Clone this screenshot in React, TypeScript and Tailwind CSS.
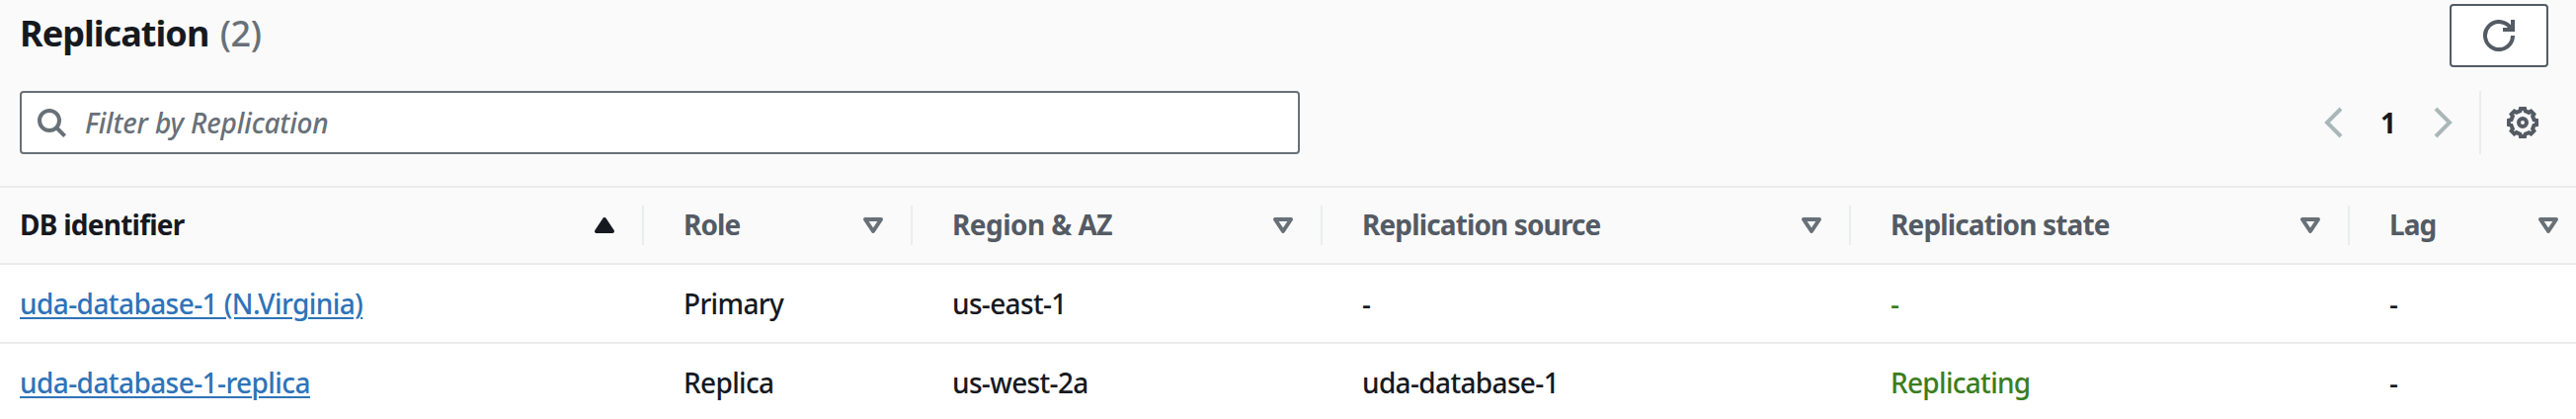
import type { ReactNode } from "react";

type Sort = "asc" | "none";

const columns: { label: string; width: string; tracking: string; sort: Sort }[] = [
  { label: "DB identifier", width: "w-[652px] pl-5", tracking: "tracking-[-0.75px]", sort: "asc" },
  { label: "Role", width: "w-[272px] pl-10", tracking: "tracking-[-0.9px]", sort: "none" },
  { label: "Region & AZ", width: "w-[415px] pl-10", tracking: "tracking-[-0.55px]", sort: "none" },
  { label: "Replication source", width: "w-[535px] pl-10", tracking: "tracking-[-0.87px]", sort: "none" },
  { label: "Replication state", width: "w-[505px] pl-10", tracking: "tracking-[-0.85px]", sort: "none" },
  { label: "Lag", width: "w-[229px] pl-10", tracking: "tracking-[-0.9px]", sort: "none" },
];

const rows = [
  ["uda-database-1 (N.Virginia)", "Primary", "us-east-1", "-", "-", "-"],
  ["uda-database-1-replica", "Replica", "us-west-2a", "uda-database-1", "Replicating", "-"],
];

// Outline of an eight-toothed cog centred on (8, 8).
const cogPoints = Array.from({ length: 8 }, (_, i) => {
  const a = (i * Math.PI) / 4;
  return [
    [-1.05, -7],
    [1.05, -7],
    [1.35, -5.8],
    [3.15, -5.05],
  ]
    .map(([x, y]) => `${(8 + x * Math.cos(a) - y * Math.sin(a)).toFixed(2)},${(8 + x * Math.sin(a) + y * Math.cos(a)).toFixed(2)}`)
    .join(" ");
}).join(" ");

function Icon({ className, children }: { className: string; children: ReactNode }) {
  return (
    <svg viewBox="0 0 16 16" className={`size-8 shrink-0 ${className}`} fill="none" stroke="currentColor" strokeWidth={2}>
      {children}
    </svg>
  );
}

function SortIcon({ sort }: { sort: Sort }) {
  return sort === "asc" ? (
    <Icon className="text-[#16191f]">
      <path d="M4 11h8L8 5l-4 6z" fill="currentColor" strokeLinejoin="round" />
    </Icon>
  ) : (
    <Icon className="text-[#687078]">
      <path d="M4 5h8l-4 6-4-6z" strokeLinejoin="round" />
    </Icon>
  );
}

function Cell({ value, index }: { value: string; index: number }) {
  if (index === 0)
    return (
      <a href="#" className="text-[#2e73b8] tracking-[-0.58px] underline decoration-2 underline-offset-[3px]">
        {value}
      </a>
    );
  if (index === 4) return <span className="text-[#3a7d1e] tracking-[-0.7px]">{value}</span>;
  return <span className="tracking-[-0.65px]">{value}</span>;
}

export default function App() {
  return (
    <div className="h-[424px] w-[2608px] overflow-hidden bg-white font-['Noto_Sans',sans-serif] text-[28px] leading-10 font-medium text-[#16191f]">
      <header className="h-[188px] bg-[#fafafa] pt-1">
        <div className="flex h-16 items-start justify-between pl-5 pr-7">
          <h2 className="pt-2 text-[36px] leading-[44px] font-bold tracking-[-0.95px]">
            Replication <span className="pl-[3px] font-medium tracking-[-0.4px] text-[#687078]">(2)</span>
          </h2>
          <button className="flex h-16 w-[100px] items-center justify-center rounded-[4px] border-2 border-[#545b64] bg-white text-[#545b64]">
            <Icon className="">
              <path d="M10 5h5V0" />
              <path d="M15 8a7 7 0 1 1-.7-3.05" />
            </Icon>
          </button>
        </div>
        <div className="mt-6 flex h-16 items-center justify-between pl-5">
          <div className="flex h-16 w-[1296px] items-center rounded-[4px] border-2 border-[#687078] bg-white pl-3.5 text-[#687078]">
            <Icon className="">
              <circle cx="7" cy="7" r="5" />
              <path d="M10.5 10.5l4.3 4.3" />
            </Icon>
            <span className="pl-[18px] tracking-[-0.15px] italic">Filter by Replication</span>
          </div>
          <div className="flex h-16 items-center pr-[38px]">
            <Icon className="text-[#aab7b8]">
              <path d="M11 1L4 8l7 7" />
            </Icon>
            <span className="w-[76px] text-center font-bold">1</span>
            <Icon className="text-[#aab7b8]">
              <path d="M5 1l7 7-7 7" />
            </Icon>
            <div className="ml-[22px] mr-[26px] h-16 w-0.5 bg-[#eaeded]" />
            <Icon className="text-[#545b64]">
              <polygon points={cogPoints} />
              <circle cx="8" cy="8" r="2" />
            </Icon>
          </div>
        </div>
      </header>
      <div className="flex h-20 items-center border-y-2 border-[#ebebeb] bg-[#fafafa]">
        {columns.map(({ label, width, tracking, sort }, i) => (
          <div
            key={label}
            className={`flex h-10 shrink-0 items-center justify-between ${width} ${
              i < 5 ? "border-r-2 border-[#eaeded] pr-[22px]" : "pr-3"
            }`}
          >
            <span className={`pb-0.5 font-bold ${tracking} ${sort === "asc" ? "text-[#16191f]" : "text-[#545b64]"}`}>
              {label}
            </span>
            <SortIcon sort={sort} />
          </div>
        ))}
      </div>
      {rows.map((row, r) => (
        <div key={row[0]} className={`flex h-20 items-center border-b-2 ${r === 0 ? "border-[#ebebeb]" : "border-white"}`}>
          {row.map((value, i) => (
            <div key={i} className={`shrink-0 ${columns[i].width}`}>
              <Cell value={value} index={i} />
            </div>
          ))}
        </div>
      ))}
    </div>
  );
}
